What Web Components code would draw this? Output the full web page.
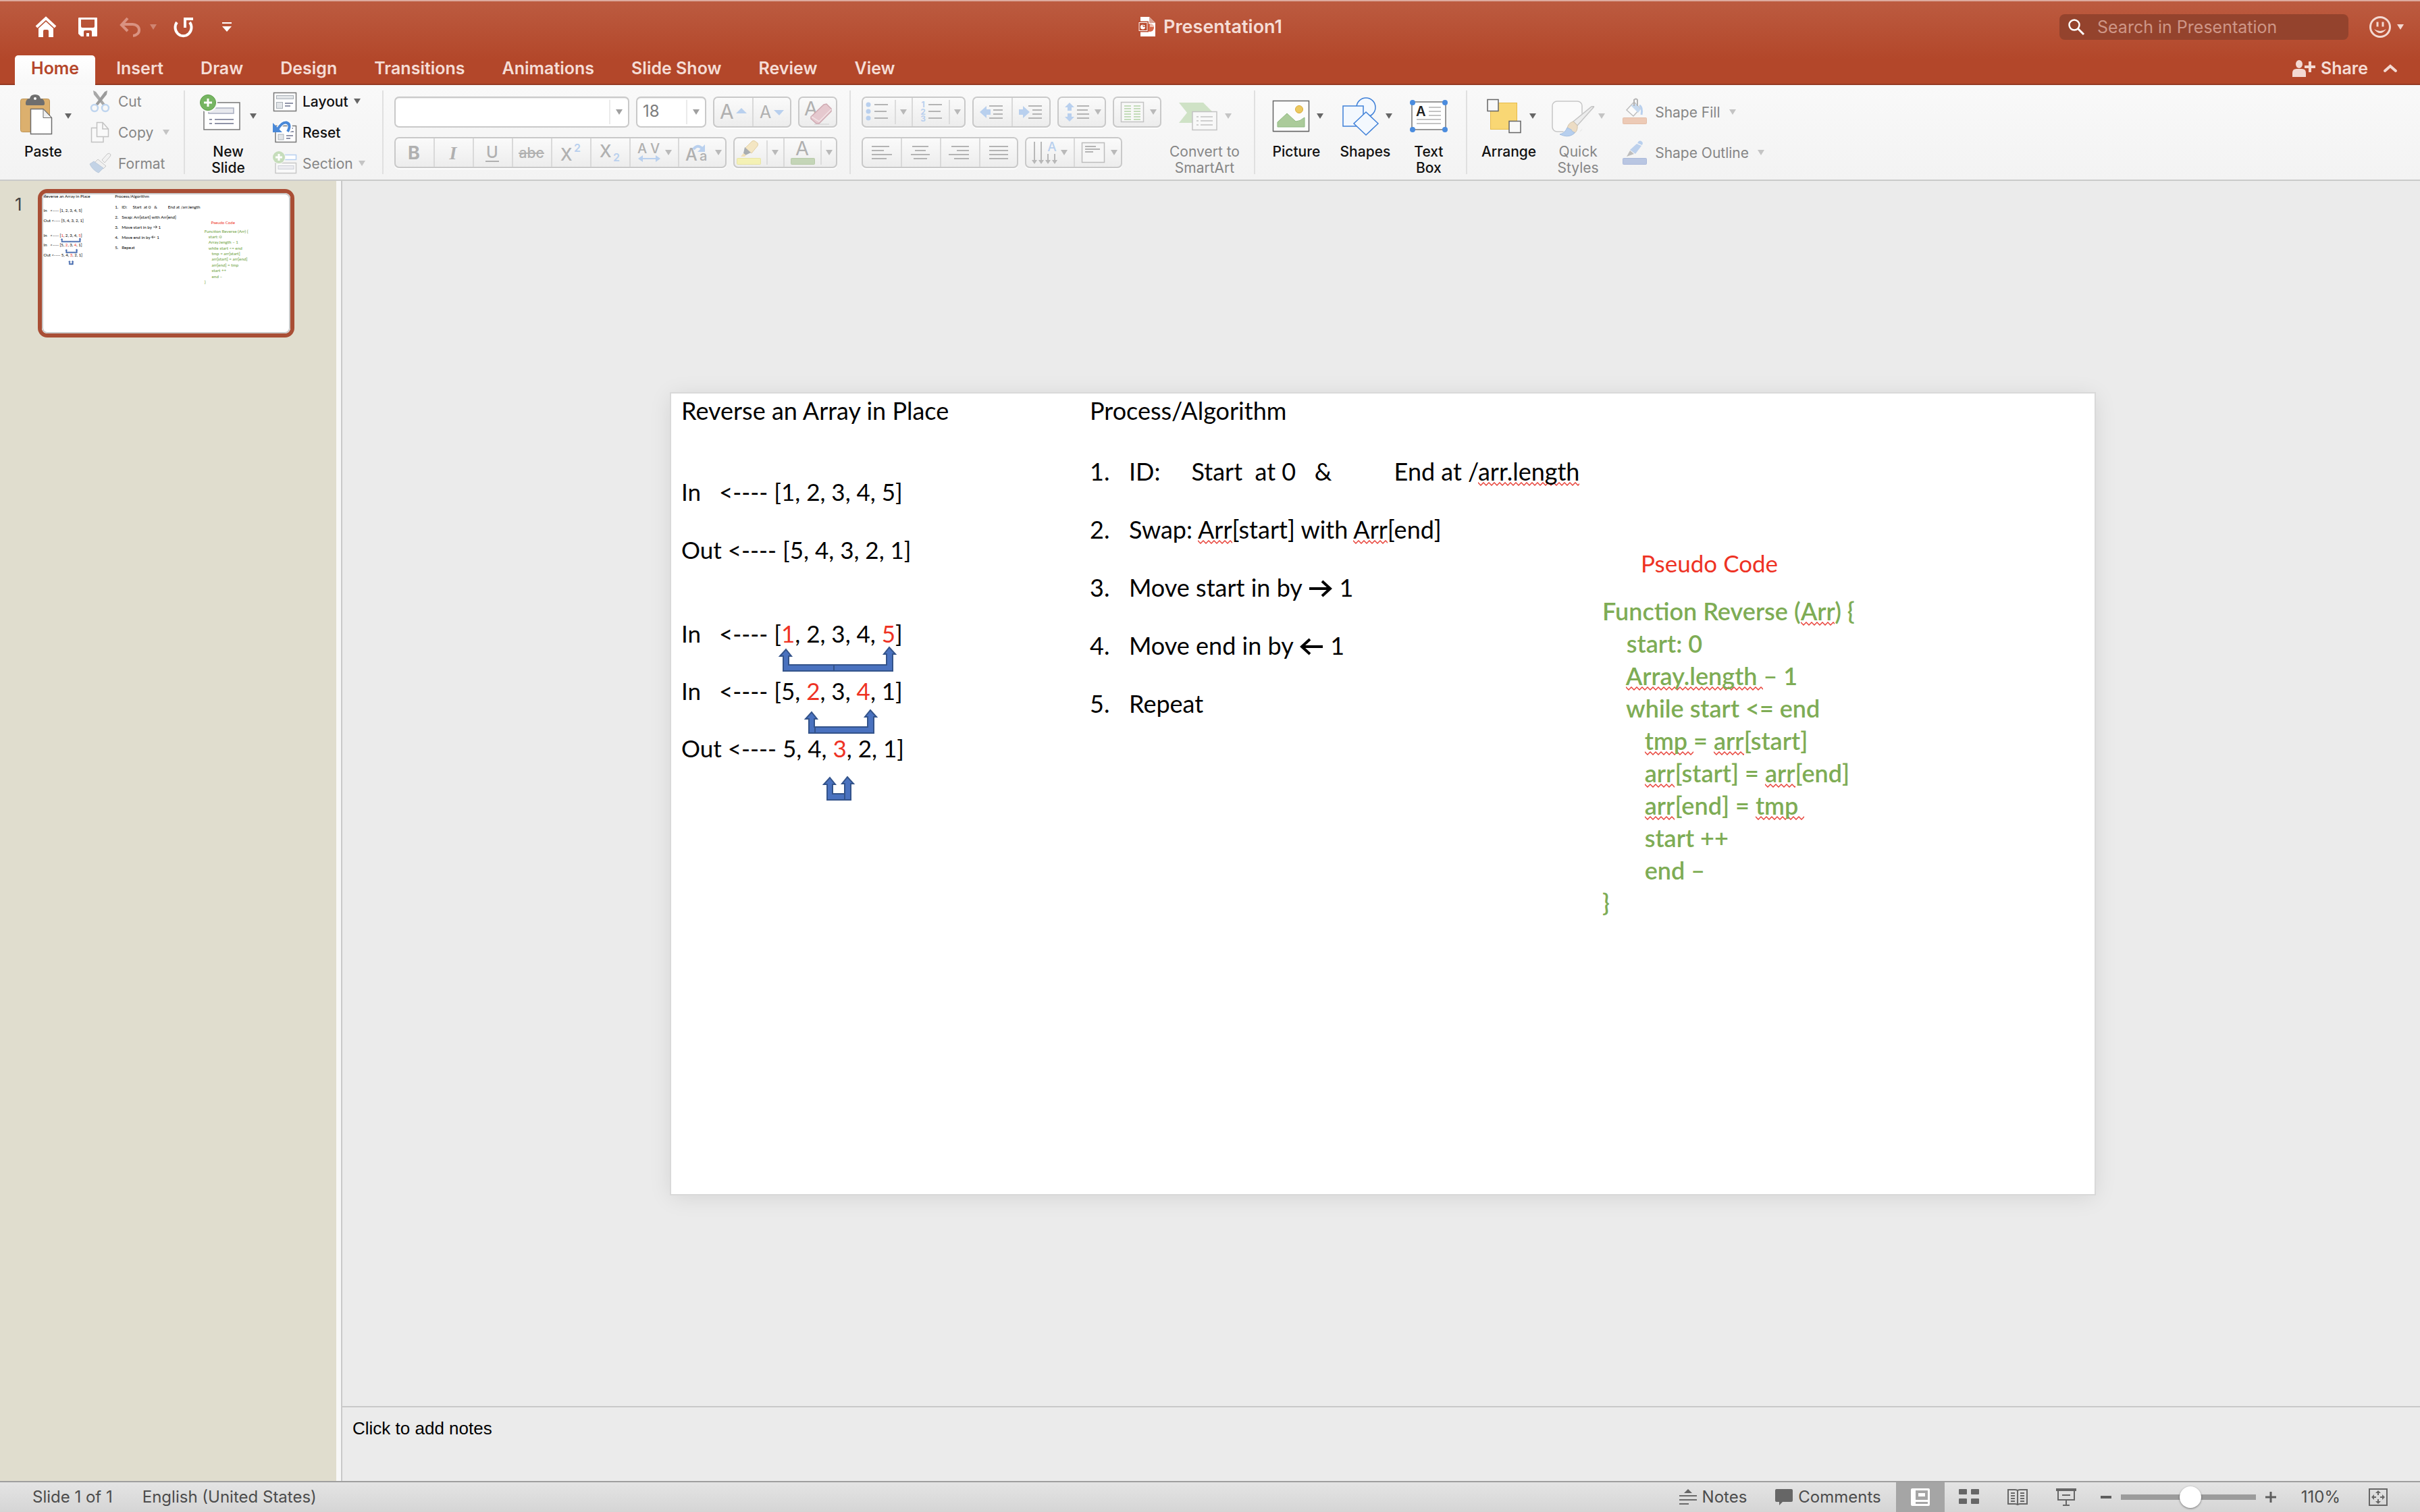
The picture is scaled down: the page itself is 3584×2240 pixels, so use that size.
<!DOCTYPE html>
<html lang="en">
<head>
<meta charset="utf-8">
<title>Presentation1</title>
<style>
  html, body { margin: 0; height: 100%; }
  body { font-family: Inter, "Liberation Sans", sans-serif; overflow: hidden; }
</style>
</head>
<body>
<ppt-app></ppt-app>

<script>
/* ---------- icon drawings ---------- */
const G = '#b0b0b0', B = '#b9d0ee';
const lines = (rows, c = '#b4b4b4') => rows.map(([a, b, y]) => `<path d="M${a} ${y}H${b}" stroke="${c}" stroke-width="2"/>`).join('');
const tri = (x, y = 23) => `<path d="M${x - 5} ${y - 4}h10l-5 8z" fill="#b9b9b9"/>`;
const bar = x => `<path d="M${x} 5V41" stroke="#dcdcdc" stroke-width="2"/>`;
const txt = (x, y, s, t, o = '') => `<text x="${x}" y="${y}" font-size="${s}" fill="${G}" ${o}>${t}</text>`;

const ICONS = {
  home: [34, 34, `<path d="M3 17L17 4L31 17" fill="none" stroke="#fff" stroke-width="4"/><path d="M6 19L17 9L28 19V32H21V23q0-2-2-2h-4q-2 0-2 2v9H6z" fill="#fff"/>`],
  save: [30, 30, `<path fill-rule="evenodd" fill="#fff" d="M2 1H28Q29 1 29 2V28Q29 29 28 29H5L1 25V2Q1 1 2 1zM5 4V14q0 2 2 2H23q2 0 2-2V4zM9 29V22q0-2 2-2H19q2 0 2 2v7H17V24H13v5z"/>`],
  undo: [32, 30, `<path d="M12 2L3 12L12 21M3 11H19a9 8 0 0 1 1 17" fill="none" stroke="#d99281" stroke-width="4"/>`],
  redo: [32, 32, `<path d="M6 9A12 12.500 0 1 0 25 9" fill="none" stroke="#fff" stroke-width="4"/><path d="M18 17V4H30" fill="none" stroke="#fff" stroke-width="4"/>`],
  customize: [16, 16, `<path d="M1 2H15" stroke="#fff" stroke-width="2"/><path d="M1 7H15L8 15z" fill="#fff"/>`],
  doc: [28, 32, `<path d="M4 1H17L26 10V30H4z" fill="#fff"/><path d="M17 1V10H26z" fill="#d9a394"/><circle cx="18" cy="17" r="6" fill="#d8684a"/><path d="M18 11a6 6 0 0 1 6 5h-6z" fill="#f0c0b0"/><rect x="1" y="8.500" width="14" height="14" fill="#b94a2e" stroke="#b94a2e" stroke-width="2"/><rect x="2" y="9.500" width="12" height="12" fill="#b94a2e" stroke="#fff"/><circle cx="7.500" cy="16" r="3.500" fill="#fff"/><path d="M8 12V15.500H12" stroke="#b94a2e" fill="none"/>`],
  search: [26, 26, `<circle cx="10" cy="10" r="7.500" fill="none" stroke="#fff" stroke-width="2.500"/><path d="M15.500 15.500L24 24" stroke="#fff" stroke-width="3"/>`],
  smile: [34, 34, `<circle cx="17" cy="17" r="14.500" fill="none" stroke="#f3d9d2" stroke-width="3"/><path d="M13 9.500v7M21 9.500v7" stroke="#f3d9d2" stroke-width="3"/><path d="M8 20q9 12 18 0q-9 6-18 0z" fill="#f3d9d2"/>`],
  caretPale: [10, 8, `<path d="M0 0H10L5 8z" fill="#f3d9d2"/>`],
  caretUndo: [10, 8, `<path d="M0 0H10L5 8z" fill="#cf8572"/>`],
  caretDark: [10, 8, `<path d="M0 0H10L5 8z" fill="#666"/>`],
  caretLight: [10, 8, `<path d="M0 0H10L5 8z" fill="#c4c4c4"/>`],
  caretMid: [10, 8, `<path d="M0 0H10L5 8z" fill="#a0a0a0"/>`],
  share: [36, 28, `<ellipse cx="10" cy="8" rx="5" ry="6" fill="#f3d9d2"/><path d="M0 27V21Q0 15 6 15H14Q20 15 20 21V27z" fill="#f3d9d2"/><path d="M18 12H34M26 4V20" stroke="#f3d9d2" stroke-width="4"/>`],
  chevron: [22, 14, `<path d="M3 11L11 4L19 11" fill="none" stroke="#f3d9d2" stroke-width="4" stroke-linecap="round"/>`],

  paste: [60, 64, `<rect x="8.500" y="8.500" width="43" height="49" rx="3" fill="#dcb06e" stroke="#bd9455"/><path d="M16 16q0-8 6-8q1-6 8-6t8 6q6 0 6 8q0 2-3 2H19q-3 0-3-2z" fill="#6e6e6e"/><circle cx="30" cy="8" r="2" fill="#fff"/><path d="M23.500 23.500H42L54.500 36.500V60.500H23.500z" fill="#fff" stroke="#6d6d6d" stroke-width="1.500"/><path d="M42 23.500V36.500H54.500z" fill="#f0f0f0" stroke="#6d6d6d"/>`],
  newSlide: [60, 64, `<rect x="6" y="14" width="53" height="40" fill="#fff" stroke="#777" stroke-width="1.500"/><rect x="13" y="22" width="37" height="8" fill="#e8e9ee" stroke="#a9aec0" stroke-width="1.500"/><path d="M14 39h4M22 39h28M14 45h4M22 45h28" stroke="#9094a8" stroke-width="2"/><circle cx="12" cy="14" r="14" fill="#f8f8f8"/><circle cx="12" cy="14" r="11.500" fill="#76b562" stroke="#5ea04a"/><path d="M6 14H18M12 8V20" stroke="#fff" stroke-width="3"/>`],
  smartart: [60, 64, `<path d="M2 14H38L52 28H22V44H2L14 29z" fill="#cfe2c6"/><rect x="22" y="27.500" width="36" height="27" fill="#f8f8f8" stroke="#c3c3c3" stroke-width="1.500"/><path d="M28 35h3M34 35h18M28 41h3M34 41h18M28 47h3M34 47h18" stroke="#cfcfcf" stroke-width="2"/>`],
  picture: [60, 64, `<rect x="6" y="12" width="52" height="46" fill="#d9d9d9"/><rect x="5.500" y="11.500" width="53" height="45" fill="#fcfcfc" stroke="#666" stroke-width="1.500"/><path d="M12 50V43L26 30L39 42Q45 42 52 36V50z" fill="#abcb9a" stroke="#8eb980"/><circle cx="44" cy="24" r="5.500" fill="#ecc95f" stroke="#dbaa3b"/>`],
  shapes: [60, 64, `<g stroke="#3f80d8" stroke-width="1.500" fill="#f3f8fe"><circle cx="41" cy="21" r="14"/><rect x="7" y="19" width="30" height="30"/><path d="M41 28L59 45L41 62L23 45z"/></g>`],
  textbox: [60, 64, `<rect x="5" y="13" width="50" height="41" fill="#fff" stroke="#777" stroke-width="1.500"/><g fill="#4b8cde"><circle cx="6" cy="14" r="4"/><circle cx="54" cy="14" r="4"/><circle cx="6" cy="54" r="4"/><circle cx="54" cy="54" r="4"/></g><text x="11" y="34" font-size="20" font-weight="600" fill="#222">A</text><path d="M30 21H48M30 27H48M30 33H48M12 39H48M12 45H48" stroke="#c4c4c4" stroke-width="2"/>`],
  arrange: [60, 64, `<rect x="12.500" y="14.500" width="39" height="39" fill="#f9d774" stroke="#e6bb4a"/><rect x="8" y="9.500" width="16" height="17" fill="#f8f8f8" stroke="#666" stroke-width="1.500"/><rect x="40" y="41.500" width="17" height="17" fill="#f8f8f8" stroke="#666" stroke-width="1.500"/>`],
  quick: [60, 64, `<rect x="2" y="12" width="44" height="45" rx="7" fill="#fafafa" stroke="#c6c6c6" stroke-width="1.500"/><path d="M63 20L50 49L38 62H14L32 42L58 20z" fill="#f6f6f6"/><path d="M63 21q2-2-3-1L33 42l6 6z" fill="#ececec" stroke="#c4c4c4" stroke-width="1.500"/><path d="M33 42q-8 2-9 11l10 7q6-4 5-12z" fill="#ecdcc4" stroke="#d3c4ac"/><path d="M24 51q-3 8-11 10q11 5 18 1q4-2 4-4q-4 0-5-4q-4-2-6-3z" fill="#b7cfee" stroke="#a5bfe0"/>`],

  cut: [36, 36, `<path d="M7 2L11 4L26 24H21L8 8z" fill="#a8a8a8"/><path d="M28 2L24 4L9 24H14L27 8z" fill="#9b9b9b"/><circle cx="9" cy="28" r="5" fill="none" stroke="#bfd5ef" stroke-width="2.500"/><circle cx="25" cy="28" r="5" fill="none" stroke="#bfd5ef" stroke-width="2.500"/>`],
  copy: [36, 36, `<g fill="#f9f9f9" stroke="#c2c2c2" stroke-width="1.500"><path d="M4.500 11.500H22V32.500H4.500z"/><path d="M12.500 3.500H21L29.500 13V24.500H12.500z"/><path d="M21 3.500V13H29.500" fill="none"/></g>`],
  format: [36, 36, `<path d="M20 13L28 4q3-2 5 1q0 2-2 4L24 17z" fill="#f2f2f2" stroke="#c6c6c6"/><path d="M14 12L26 22L22 26L8 18z" fill="#f0f0f0" stroke="#c6c6c6"/><path d="M8 15L2 19Q6 28 15 32L22 25z" fill="#c3d3e6" stroke="#bccadb"/>`],
  layout: [36, 36, `<rect x="1.500" y="5.500" width="33" height="27" fill="#fff" stroke="#777" stroke-width="1.500"/><rect x="5.500" y="9.500" width="25" height="5" fill="#e2e5e8" stroke="#aab1b8"/><rect x="5.500" y="19.500" width="9" height="9" fill="#e2e5e8" stroke="#aab1b8"/><path d="M18 21H30M18 25H26" stroke="#9094a8" stroke-width="2"/>`],
  reset: [36, 36, `<rect x="4" y="8.500" width="30.500" height="24" fill="#fff" stroke="#777" stroke-width="1.500"/><path d="M26 12h4M26 17h5" stroke="#9094a8" stroke-width="2"/><rect x="8" y="21" width="8" height="8" fill="#e2e5e8" stroke="#aab1b8"/><path d="M20 23H30M20 27H26" stroke="#9094a8" stroke-width="2"/><path d="M8 13Q13 2 20 3Q28 5 24 16" fill="none" stroke="#fff" stroke-width="7"/><path d="M7 14Q13 3 20 3.500Q28 6 22 17" fill="none" stroke="#4a89d8" stroke-width="4"/><path d="M0 4V18H14z" fill="#4a89d8"/>`],
  section: [36, 36, `<rect x="17" y="5.500" width="17.500" height="7" fill="#fff" stroke="#b7d0f0" stroke-width="1.500"/><rect x="4" y="17.500" width="30.500" height="15" fill="#f9f9f9" stroke="#c8c8c8" stroke-width="1.500"/><rect x="8" y="21.500" width="23" height="5" fill="#ececf0" stroke="#cdd0d8"/><circle cx="9" cy="9" r="10" fill="#f6f6f6"/><circle cx="9" cy="9" r="9" fill="#c6ddbb"/><path d="M4 9H14M9 4V14" stroke="#fff" stroke-width="3"/>`],
  fill: [40, 36, `<rect x="0.500" y="26.500" width="35" height="9" rx="1" fill="#edcab6" stroke="#e3bda7"/><path d="M17 3L26 13L16 24L6 15z" fill="#fbfbfb" stroke="#bdbdbd" stroke-width="1.500"/><path d="M12 8L23 19L27 14L20 6" fill="#c6d9ef"/><path d="M17 9V0q3-3 5 0v9" fill="none" stroke="#b3b3b3" stroke-width="2"/><path d="M25 8q5 3 3 14" fill="none" stroke="#b9d0ee" stroke-width="3"/>`],
  outline: [40, 36, `<rect x="0.500" y="26.500" width="35" height="9" rx="1" fill="#b9c6e2" stroke="#aab9da"/><path d="M24 1q4-2 6 3L29 7L22 4z" fill="#b9d0ee"/><path d="M21 5L28 8L19 20L11 14z" fill="#bcd0ec"/><path d="M11 15L17 20L6 24z" fill="#bdbdbd"/>`],

  grow: [58, 46, txt(10, 33, 30, 'A') + `<path d="M34 25L42 17L50 25z" fill="${B}"/>`],
  shrink: [58, 46, txt(11, 32, 25, 'A') + `<path d="M32 20L40 28L47 20z" fill="${B}"/>`],
  clear: [58, 46, txt(9, 28, 29, 'A') + `<path d="M24 41H46" stroke="#dedede" stroke-width="2"/><path d="M38 12L42 11L49 18V22L31 40H27L19 33V30z" fill="#e5c8ce" stroke="#cfaab2" stroke-width="1.500"/><path d="M20 30L31 37L49 19" fill="none" stroke="#f2e2e5" stroke-width="1.500"/>`],
  bold: [58, 46, txt(29, 33, 27, 'B', 'font-weight="700" text-anchor="middle"')],
  italic: [58, 46, txt(29, 33, 28, 'I', 'font-weight="700" font-style="italic" text-anchor="middle" font-family="Liberation Serif, serif"')],
  underline: [58, 46, txt(29, 31, 24, 'U', 'font-weight="500" text-anchor="middle"') + lines([[19, 39, 36]], G)],
  strike: [58, 46, txt(29, 31, 21, 'abc', 'font-weight="500" text-anchor="middle"') + lines([[10, 48, 24]], G)],
  sup: [58, 46, txt(14, 35, 25, 'X', 'font-weight="500"') + `<text x="34" y="22" font-size="16" font-weight="600" fill="${B}">2</text>`],
  sub: [58, 46, txt(14, 30, 25, 'X', 'font-weight="500"') + `<text x="34" y="36" font-size="16" font-weight="600" fill="${B}">2</text>`],
  spacing: [72, 46, txt(12, 24, 20, 'A', 'font-weight="500"') + txt(31, 24, 20, 'V', 'font-weight="500"') + `<path d="M18 32H41" stroke="${B}" stroke-width="2"/><path d="M20 27V37L13 32zM39 27V37L46 32z" fill="${B}"/>` + tri(58)],
  casing: [72, 46, txt(11, 35, 25, 'A', 'font-weight="500"') + txt(32, 35, 20, 'a', 'font-weight="500"') + `<path d="M23 18Q29 10 36 17" fill="none" stroke="${B}" stroke-width="4"/><path d="M40 11V22H29z" fill="${B}"/>` + tri(60)],
  highlight: [74, 46, `<rect x="5.500" y="31.500" width="35" height="9" rx="1" fill="#f4f1b5" stroke="#e8e4a4"/><path d="M28 6q2-1 4 0l4 3q1 2 0 4L27 24L17 17z" fill="#f4e6c3" stroke="#e2d0a5"/><path d="M17 15L26 23L18 27L15 24z" fill="#a9adb0"/><path d="M15 24L19 27L17 29H11z" fill="#f0dfb8"/>` + bar(50) + tri(62)],
  fontColor: [80, 46, txt(18, 27, 29, 'A') + `<rect x="11.500" y="31.500" width="35" height="9" rx="1" fill="#c4d5b7" stroke="#b7caa8"/>` + bar(56) + tri(68)],
  bullets: [74, 46, `<g fill="${B}"><circle cx="10" cy="12" r="3.500"/><circle cx="10" cy="22" r="3.500"/><circle cx="10" cy="32" r="3.500"/></g>` + lines([[19, 39, 12], [19, 37, 22], [19, 39, 32]]) + bar(50) + tri(62)],
  numbers: [80, 46, `<g fill="${B}" font-size="12" font-weight="700" text-anchor="middle"><text x="17" y="16">1</text><text x="17" y="27">2</text><text x="17" y="37">3</text></g>` + lines([[25, 45, 12], [25, 43, 22], [25, 45, 32]]) + bar(56) + tri(68)],
  outdent: [58, 46, `<path d="M11 23L21 14V19H27V27H21V32z" fill="${B}"/>` + lines([[25, 45, 14], [31, 45, 20], [31, 45, 26], [25, 45, 32]])],
  indent: [58, 46, `<path d="M27 23L17 14V19H11V27H17V32z" fill="${B}"/>` + lines([[25, 45, 14], [31, 45, 20], [31, 45, 26], [25, 45, 32]])],
  lineSpacing: [72, 46, `<path d="M18 9L25 16H21V21H15V16H11zM18 37L25 30H21V25H15V30H11z" fill="${B}"/>` + lines([[29, 47, 14], [29, 45, 20], [29, 47, 26], [29, 47, 32]]) + tri(60)],
  columns: [72, 46, `<rect x="12.500" y="8.500" width="33" height="29" fill="#f8f8f8" stroke="#c3c3c3" stroke-width="1.500"/>` + lines([14, 18, 22, 26, 30, 34].flatMap(y => [[17, 27, y], [31, 41, y]]), '#c4dcba') + tri(60)],
  left: [58, 46, lines([[15, 41, 14], [15, 33, 20], [15, 45, 26], [15, 37, 32]])],
  center: [58, 46, lines([[17, 41, 14], [21, 37, 20], [15, 43, 26], [19, 39, 32]])],
  right: [58, 46, lines([[17, 43, 14], [25, 43, 20], [13, 43, 26], [21, 43, 32]])],
  justify: [58, 46, lines([[15, 43, 14], [15, 43, 20], [15, 43, 26], [15, 43, 32]])],
  textDir: [72, 46, `<path d="M14 7V36M24 7V36M34 25V36M44 25V36" stroke="#b8b8b8" stroke-width="2"/><path d="M10 34h8l-4 6zM20 34h8l-4 6zM30 34h8l-4 6zM40 34h8l-4 6z" fill="#b8b8b8"/><text x="40" y="21" font-size="19" fill="${B}" font-weight="500" text-anchor="middle">A</text>` + tri(58)],
  alignText: [72, 46, `<rect x="12.500" y="8.500" width="33" height="29" fill="#f6f6f6" stroke="#bdbdbd" stroke-width="1.500"/>` + lines([[17, 33, 14], [17, 39, 18], [17, 29, 22]]) + tri(60)],

  arrowRight: [35, 26, `<path d="M1 13H31M20 2L32 13L20 24" fill="none" stroke="#000" stroke-width="4"/>`],
  arrowLeft: [35, 26, `<path d="M34 13H4M15 2L3 13L15 24" fill="none" stroke="#000" stroke-width="4"/>`],

  notes: [26, 26, `<path d="M7 7L13 1L19 7z" fill="#666"/><path d="M0 11H26M0 17H26M0 23H14" stroke="#6a6a6a" stroke-width="2"/>`],
  comments: [26, 26, `<path d="M0 3Q0 1 2 1H24Q26 1 26 3V18Q26 20 24 20H11L6 25V20H2Q0 20 0 18z" fill="#666"/>`],
  normal: [28, 26, `<path fill-rule="evenodd" fill="#fff" d="M2 0H26Q28 0 28 2V24Q28 26 26 26H2Q0 26 0 24V2Q0 0 2 0zM7 3V17H25V3zM7 20V23H25V20z"/><rect x="11" y="7" width="10" height="5" fill="#fff"/>`],
  sorter: [30, 24, `<g fill="#666"><rect width="12" height="8" rx="1"/><rect x="18" width="12" height="8" rx="1"/><rect y="14" width="12" height="8" rx="1"/><rect x="18" y="14" width="12" height="8" rx="1"/></g>`],
  reading: [30, 26, `<path d="M1 2H11Q15 2 15 4Q15 2 19 2H29V23H19Q15 23 15 25Q15 23 11 23H1zM15 4V24" fill="none" stroke="#666" stroke-width="2"/><path d="M5 7h6M5 11h6M5 15h6M5 19h6M19 7h6M19 11h6M19 15h6M19 19h6" stroke="#666" stroke-width="2"/>`],
  show: [30, 26, `<path d="M0 2H30" stroke="#666" stroke-width="4"/><path d="M3 4V17H27V4M9 10H21M15 17V24M10 25H20" fill="none" stroke="#666" stroke-width="2"/>`],
  minus: [16, 16, `<path d="M0 8H16" stroke="#5e5e5e" stroke-width="4"/>`],
  plus: [16, 16, `<path d="M0 8H16M8 0V16" stroke="#5e5e5e" stroke-width="3"/>`],
  fit: [28, 26, `<rect x="1" y="1" width="26" height="24" fill="none" stroke="#666" stroke-width="2"/><path d="M14 3L18 7H10zM14 23L18 19H10zM4 13L8 9V17zM24 13L20 9V17z" fill="#666"/><path d="M14 5V10M14 16V21M6 13H11M17 13H22" stroke="#666" stroke-width="2"/>`]
};

/* ---------- base class ---------- */
class Part extends HTMLElement {
  connectedCallback() {
    if (this.shadowRoot) return;
    this.attachShadow({ mode: 'open' }).innerHTML = `<style>*{box-sizing:border-box}
      button{appearance:none;border:0;background:none;padding:0;margin:0;font:inherit;color:inherit;cursor:pointer}
      ${this.css()}</style>${this.html()}`;
  }
  a(n, d = '') { return this.getAttribute(n) ?? d; }
  css() { return ''; }
  html() { return '<slot></slot>'; }
}
const define = (n, c) => customElements.define(n, c);

define('ppt-icon', class extends Part {
  css() { return `:host{display:block;flex:none} svg{display:block;overflow:visible}`; }
  html() {
    const [w, h, d] = ICONS[this.a('name')];
    return `<svg width="${w}" height="${h}" viewBox="0 0 ${w} ${h}" aria-hidden="true">${d}</svg>`;
  }
});

/* ---------- window header ---------- */
define('ppt-header', class extends Part {
  css() { return `
    :host{display:block;flex:none;color:#f5ddd6;background:linear-gradient(#dcaa9e 0 2px,#bc5b40 2px,#b3472a 70%,#b3472a 124px,#953a24 124px)}
    .top{display:grid;grid-template-columns:1fr auto 1fr;align-items:center;height:82px;padding:0 24px 2px}
    .quick{display:flex;align-items:center;padding-left:27px}
    .save{margin-left:30px}.undo{margin-left:32px}.uc{margin-left:13px}.redo{margin-left:24px}.cust{margin-left:40px}
    h1{display:flex;align-items:center;gap:10px;margin:0;font-size:27px;line-height:34px;font-weight:600}
    .right{display:flex;align-items:center;justify-content:flex-end}
    label{display:flex;align-items:center;gap:18px;width:428px;height:38px;padding:0 12px;border-radius:8px;background:#94432d;margin-right:30px}
    input{flex:1;min-width:0;border:0;outline:0;background:none;padding:0;font:400 25px/32px Inter,sans-serif;color:#fff}
    input::placeholder{color:#ce9687;opacity:1}
    .smile{display:flex;align-items:center;gap:8px}
    .tabs{display:flex;align-items:stretch;gap:1px;height:44px;padding:0 33px 0 19px;font-size:25px;font-weight:600}
    .tabs>button{padding:0 27px 6px}
    .tabs>button.on{margin:0 3px;padding:0 24px 6px;background:linear-gradient(#fff,#f8f8f8);color:#b5462a;border-radius:5px 5px 0 0}
    .share{margin-left:auto;display:flex;align-items:center;gap:22px;padding-bottom:6px}
    .share button{display:flex;align-items:center;gap:6px}`; }
  html() { return `
    <div class="top">
      <div class="quick">
        <button aria-label="Home"><ppt-icon name="home"></ppt-icon></button>
        <button class="save" aria-label="Save"><ppt-icon name="save"></ppt-icon></button>
        <button class="undo" aria-label="Undo"><ppt-icon name="undo"></ppt-icon></button>
        <button class="uc" aria-label="Undo history"><ppt-icon name="caretUndo"></ppt-icon></button>
        <button class="redo" aria-label="Repeat"><ppt-icon name="redo"></ppt-icon></button>
        <button class="cust" aria-label="Customize toolbar"><ppt-icon name="customize"></ppt-icon></button>
      </div>
      <h1><ppt-icon name="doc"></ppt-icon>Presentation1</h1>
      <div class="right">
        <label><ppt-icon name="search"></ppt-icon><input type="text" aria-label="Search in Presentation" placeholder="Search in Presentation"></label>
        <button class="smile" aria-label="Feedback"><ppt-icon name="smile"></ppt-icon><ppt-icon name="caretPale"></ppt-icon></button>
      </div>
    </div>
    <nav class="tabs">
      ${['Home', 'Insert', 'Draw', 'Design', 'Transitions', 'Animations', 'Slide Show', 'Review', 'View'].map((t, i) => `<button${i ? '' : ' class="on"'}>${t}</button>`).join('')}
      <div class="share"><button><ppt-icon name="share"></ppt-icon>Share</button><button aria-label="Collapse ribbon"><ppt-icon name="chevron"></ppt-icon></button></div>
    </nav>`; }
});

/* ---------- ribbon controls ---------- */
define('big-button', class extends Part {
  css() { return `
    :host{display:block;flex:none}
    button{display:flex;flex-direction:column;align-items:center;gap:11px;padding-top:12px;font-size:21px;line-height:24px;font-weight:500;color:#111}
    :host([dim]) button{color:#868686;font-weight:400}
    .i{display:flex;align-items:center;gap:var(--caret-gap,10px)}
    .i ppt-icon+ppt-icon{padding-top:4px}
    .t{white-space:pre-line;text-align:center}`; }
  html() { return `<button><span class="i"><ppt-icon name="${this.a('icon')}"></ppt-icon>${this.hasAttribute('plain') ? '' : `<ppt-icon name="${this.hasAttribute('dim') ? 'caretLight' : 'caretDark'}"></ppt-icon>`}</span><span class="t"><slot></slot></span></button>`; }
});
define('small-button', class extends Part {
  css() { return `
    :host{display:block;flex:none}
    button{display:flex;align-items:center;gap:8px;height:var(--row,46px);font-size:21px;line-height:24px;font-weight:500;color:#111;white-space:nowrap}
    :host([dim]) button{color:#868686;font-weight:400}
    .t{padding-top:2px}
    .c{margin-left:var(--caret-shift,0px)}`; }
  html() { return `<button><ppt-icon name="${this.a('icon')}"></ppt-icon><span class="t"><slot></slot></span>${this.hasAttribute('menu') ? `<ppt-icon class="c" name="${this.hasAttribute('dim') ? 'caretLight' : 'caretDark'}"></ppt-icon>` : ''}</button>`; }
});
define('seg-group', class extends Part {
  css() { return `
    :host{display:flex;flex:none;height:46px;border-radius:7px;background:linear-gradient(#fbfbfb,#ececec);box-shadow:inset 0 0 0 2px #c9c9c9,0 2px 0 #fdfdfd}
    button+button{box-shadow:inset 2px 0 0 #d9d9d9}
    button{height:42px;margin-top:2px} ppt-icon{margin-top:-2px}`; }
  html() { return this.a('items').split(' ').map(n => `<button aria-label="${n}"><ppt-icon name="${n}"></ppt-icon></button>`).join(''); }
});
define('combo-box', class extends Part {
  css() { return `
    :host{display:grid;flex:none;height:46px;border-radius:7px;background:#fff;box-shadow:inset 0 0 0 2px #c9c9c9,inset 0 4px 2px -1px #e8e8e8}
    select,.d{grid-area:1/1}
    select{appearance:none;border:0;outline:0;background:none;width:100%;padding:0 34px 3px 10px;font:400 24px/30px Inter,sans-serif;color:#7d7d7d}
    .d{justify-self:end;align-self:center;display:flex;align-items:center;gap:8px;padding-right:10px;pointer-events:none}
    .d::before{content:"";width:2px;height:36px;background:#ebebeb}`; }
  html() { return `<select aria-label="${this.a('label')}"><option>${this.a('value')}</option></select><span class="d"><ppt-icon name="caretMid"></ppt-icon></span>`; }
});
define('ribbon-section', class extends Part {
  css() { return `:host{display:flex;flex:none;align-items:flex-start;padding-left:var(--pl)}
    :host(:not([last]))::after{content:"";align-self:stretch;width:2px;margin:8px 0 8px var(--pr);background:#e0e0e0}`; }
});
define('ppt-ribbon', class extends Part {
  css() { return `
    :host{display:flex;flex:none;height:142px;background:linear-gradient(#f9f9f9,#f3f3f3);border-bottom:2px solid #c9cac9}
    .col{padding-top:1px}
    .c1{margin-left:25px;width:117px}.c2{margin-left:24px;width:138px}
    .c3{margin-left:26px;padding-top:10px;--row:60px;--caret-shift:5px}
    .wide{--caret-gap:14px}
    .rows{display:flex;flex-direction:column;gap:14px;padding-top:17px}
    .rows div{display:flex;gap:10px}
    .font{width:348px}.size{width:104px}
    .sa{margin-left:12px}.g22{margin-left:22px}.g24{margin-left:24px}`; }
  html() { return `
    <ribbon-section style="--pl:22px;--pr:24px">
      <big-button class="wide" icon="paste">Paste</big-button>
      <div class="col c1">
        <small-button dim icon="cut">Cut</small-button>
        <small-button dim menu icon="copy" style="--caret-shift:6px">Copy</small-button>
        <small-button dim icon="format">Format</small-button>
      </div>
    </ribbon-section>
    <ribbon-section style="--pl:22px;--pr:24px">
      <big-button class="wide" icon="newSlide">New<br>Slide</big-button>
      <div class="col c2">
        <small-button menu icon="layout">Layout</small-button>
        <small-button icon="reset">Reset</small-button>
        <small-button dim menu icon="section">Section</small-button>
      </div>
    </ribbon-section>
    <ribbon-section style="--pl:16px;--pr:18px">
      <div class="rows">
        <div><combo-box class="font" label="Font" value=""></combo-box><combo-box class="size" label="Font size" value="18"></combo-box><seg-group items="grow shrink"></seg-group><seg-group items="clear"></seg-group></div>
        <div><seg-group items="bold italic underline strike sup sub spacing casing"></seg-group><seg-group items="highlight fontColor"></seg-group></div>
      </div>
    </ribbon-section>
    <ribbon-section style="--pl:16px;--pr:21px">
      <div class="rows">
        <div><seg-group items="bullets numbers"></seg-group><seg-group items="outdent indent"></seg-group><seg-group items="lineSpacing"></seg-group><seg-group items="columns"></seg-group></div>
        <div><seg-group items="left center right justify"></seg-group><seg-group items="textDir alignText"></seg-group></div>
      </div>
      <big-button class="sa" dim icon="smartart">Convert to<br>SmartArt</big-button>
    </ribbon-section>
    <ribbon-section style="--pl:21px;--pr:25px">
      <big-button icon="picture">Picture</big-button>
      <big-button class="g22" icon="shapes">Shapes</big-button>
      <big-button class="g24" plain icon="textbox">Text<br>Box</big-button>
    </ribbon-section>
    <ribbon-section last style="--pl:21px">
      <big-button icon="arrange">Arrange</big-button>
      <big-button class="g22" dim icon="quick">Quick<br>Styles</big-button>
      <div class="c3">
        <small-button dim menu icon="fill">Shape Fill</small-button>
        <small-button dim menu icon="outline">Shape Outline</small-button>
      </div>
    </ribbon-section>`; }
});

/* ---------- the slide: text boxes and connectors on a free canvas ---------- */
const connector = (lx, ly, rx, ry, bottom, mid) => {
  const t = bottom - 9;
  return `<path d="M${lx} ${ly}l8 10h-4V${t}H${rx - 4}V${ry + 10}h-4l8-10l9 10h-4V${bottom}H${lx - 4}V${ly + 10}h-5z"/><path d="M${mid} ${t}V${bottom}"/>`;
};
const CODE = [
  'Function Reverse (<u>Arr</u>) {',
  '    start: 0',
  '    <u>Array.length </u>– 1',
  '    while start &lt;= end',
  '       <u>tmp </u>= <u>arr</u>[start]',
  '       <u>arr</u>[start] = <u>arr</u>[end]',
  '       <u>arr</u>[end] = <u>tmp </u>',
  '       start ++',
  '       end –',
  '}'
];
define('ppt-slide', class extends Part {
  css() { return `
    :host{display:block;position:relative;flex:none;width:2108px;height:1186px;background:#fff;color:#000;font:400 36px/44px Lato,Inter,sans-serif}
    .box{position:absolute;margin:0;padding:0;white-space:pre;font:inherit}
    .arr{display:flex;flex-direction:column;font-size:35px}
    i{font-style:normal;color:#ee3224}
    .title{left:15px;top:3px}
    .a{left:15px;top:123px;gap:42px}
    .b{left:15px;top:333px;gap:41px}
    .head{left:620px;top:3px}
    ol.box{left:620px;top:93px;display:grid;grid-template-columns:58px auto;row-gap:42px;list-style:none}
    li{display:contents}
    ppt-icon{display:inline-block;margin:0 1px;vertical-align:-1px;line-height:0}
    .pseudo{left:1436px;top:229px;color:#ee3224;font-size:35px}
    .code{left:1379px;top:298px;line-height:48px;font-weight:600;color:#7eac55}
    :host([proof]) u{background:url("data:image/svg+xml,%3Csvg xmlns='http://www.w3.org/2000/svg' width='8' height='6'%3E%3Cpath d='M-1 0L4 5L9 0' fill='none' stroke='%23e8433a' stroke-width='1.500'/%3E%3C/svg%3E") repeat-x left bottom}
    u{text-decoration:none}
    svg{position:absolute;left:0;top:0}`; }
  html() { return `
    <h2 class="box title">Reverse an Array in Place</h2>
    <div class="box arr a"><span>In   &lt;---- [1, 2, 3, 4, 5]</span><span>Out &lt;---- [5, 4, 3, 2, 1]</span></div>
    <div class="box arr b"><span>In   &lt;---- [<i>1</i>, 2, 3, 4, <i>5</i>]</span><span>In   &lt;---- [5, <i>2</i>, 3, <i>4</i>, 1]</span><span>Out &lt;---- 5, 4, <i>3</i>, 2, 1]</span></div>
    <h2 class="box head">Process/Algorithm</h2>
    <ol class="box"><li><span>1.</span><span>ID:     Start  at 0   &amp;          End at /<u>arr.length</u></span></li><li><span>2.</span><span>Swap: <u>Arr</u>[start] with <u>Arr</u>[end]</span></li><li><span>3.</span><span>Move start in by <ppt-icon name="arrowRight"></ppt-icon> 1</span></li><li><span>4.</span><span>Move end in by <ppt-icon name="arrowLeft"></ppt-icon> 1</span></li><li><span>5.</span><span>Repeat</span></li></ol>
    <p class="box pseudo">Pseudo Code</p>
    <div class="box code">${CODE.map(l => `<div>${l}</div>`).join('')}</div>
    <svg width="2108" height="1186" viewBox="0 0 2108 1186" fill="#4a72bf" stroke="#33538a" stroke-width="2" aria-hidden="true">
      ${connector(170, 379, 323, 376, 411, 241)}${connector(208, 472, 295, 469, 503, 213)}${connector(235, 569, 261, 568, 602, 257)}
    </svg>`; }
});

/* ---------- panes ---------- */
define('slide-list', class extends Part {
  css() { return `
    :host{display:flex;align-items:flex-start;gap:18px;padding:12px 0 0 22px;background:#e0ddce}
    .n{width:16px;margin-top:7px;font-size:26px;line-height:32px;color:#444}
    button{display:block;width:380px;height:220px;border:6px solid #a94e35;border-radius:14px;background:#fff;overflow:hidden;text-align:left;position:relative}
    button::after{content:"";position:absolute;inset:0;border-radius:8px;box-shadow:inset 0 0 0 2px #c9c9c9}
    ppt-slide{zoom:.1745}`; }
  html() { return `<span class="n">1</span><button aria-label="Slide 1"><ppt-slide></ppt-slide></button>`; }
});
define('notes-pane', class extends Part {
  css() { return `:host{display:block;flex:none;height:111px;border-top:2px solid #c9c9c9}
    textarea{display:block;width:100%;height:100%;border:0;outline:0;resize:none;background:none;padding:16px 15px;font:400 26px/30px "Liberation Sans",sans-serif;color:#000}
    textarea::placeholder{color:#000;opacity:1}`; }
  html() { return `<textarea aria-label="Notes" placeholder="Click to add notes"></textarea>`; }
});
define('status-bar', class extends Part {
  css() { return `
    :host{display:flex;flex:none;align-items:center;height:46px;border-top:2px solid #9f9f9f;background:linear-gradient(#e4e4e4,#d5d5d5);font-size:24px;line-height:30px;color:#4c4c4c;padding:0 48px}
    .lang{margin-left:44px}
    button{display:flex;align-items:center;gap:8px;white-space:nowrap}
    .notes{margin-left:auto}.com{margin:0 22px 0 42px}
    .v{width:72px;height:44px;justify-content:center}
    .on{background:#a5a5a5}
    .m{margin-left:15px}
    input{appearance:none;width:200px;height:32px;margin:0 14px;background:linear-gradient(#9b9b9b,#9b9b9b) center/100% 8px no-repeat;border-radius:4px}
    input::-webkit-slider-thumb{appearance:none;width:32px;height:32px;border-radius:50%;background:#fff;box-shadow:0 1px 3px rgba(0,0,0,.45)}
    .pc{margin:0 42px 0 37px}`; }
  html() { return `
    <span>Slide 1 of 1</span><span class="lang">English (United States)</span>
    <button class="notes"><ppt-icon name="notes"></ppt-icon>Notes</button>
    <button class="com"><ppt-icon name="comments"></ppt-icon>Comments</button>
    <button class="v on" aria-label="Normal"><ppt-icon name="normal"></ppt-icon></button>
    <button class="v" aria-label="Slide sorter"><ppt-icon name="sorter"></ppt-icon></button>
    <button class="v" aria-label="Reading view"><ppt-icon name="reading"></ppt-icon></button>
    <button class="v" aria-label="Slide show"><ppt-icon name="show"></ppt-icon></button>
    <button class="m" aria-label="Zoom out"><ppt-icon name="minus"></ppt-icon></button>
    <input type="range" aria-label="Zoom" min="0" max="1000" value="518">
    <button aria-label="Zoom in"><ppt-icon name="plus"></ppt-icon></button>
    <button class="pc">110%</button>
    <button aria-label="Fit slide"><ppt-icon name="fit"></ppt-icon></button>`; }
});
define('ppt-app', class extends Part {
  css() { return `
    :host{display:flex;flex-direction:column;height:100vh;background:#ebebeb}
    main{flex:1;min-height:0;display:flex}
    slide-list{flex:none;width:498px}
    .split{flex:none;width:9px;background:#f7f7f7;border-right:2px solid #c9c9c9}
    .work{flex:1;min-width:0;display:flex;flex-direction:column}
    .stage{flex:1;min-height:0;display:flex;align-items:center;justify-content:center;padding-left:5px}
    .stage ppt-slide{box-shadow:0 0 0 2px #d9d9d9,0 4px 32px rgba(0,0,0,.1)}`; }
  html() { return `
    <ppt-header></ppt-header>
    <ppt-ribbon></ppt-ribbon>
    <main><slide-list></slide-list><div class="split"></div>
      <div class="work"><div class="stage"><ppt-slide proof></ppt-slide></div><notes-pane></notes-pane></div>
    </main>
    <status-bar></status-bar>`; }
});
</script>
</body>
</html>
